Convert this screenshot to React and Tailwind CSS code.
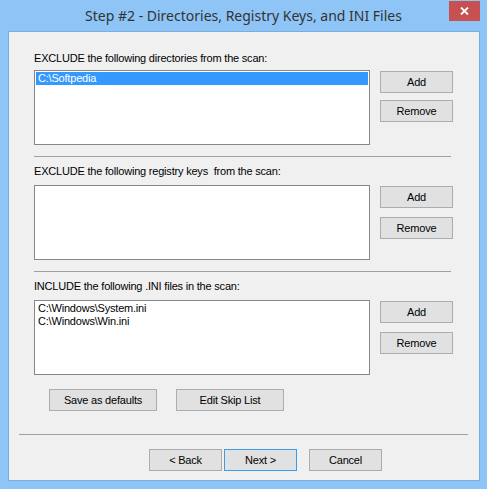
import React from 'react';

const font = { fontFamily: '"Liberation Sans", Arial, sans-serif' };

function WinButton({ children, className = '', focused = false }) {
  return (
    <button
      className={`h-[22px] flex items-center justify-center text-[11px] tracking-[-0.2px] text-black bg-[#e1e1e1] border ${
        focused ? 'border-[#3c9ce8]' : 'border-[#adadad]'
      } ${className}`}
    >
      {children}
    </button>
  );
}

function ListBox({ items = [], selected = -1 }) {
  return (
    <div className="w-[336px] h-[75px] bg-white border border-[#828790] p-px flex flex-col">
      {items.map((item, i) => (
        <div
          key={item}
          className={`h-[13px] leading-[13px] pl-[2px] text-[11px] tracking-[-0.2px] ${
            i === selected ? 'bg-[#3399ff] text-white' : 'text-black'
          }`}
        >
          {item}
        </div>
      ))}
    </div>
  );
}

function Section({ label, items, selected, labelTop, listTop, removeGap = 9 }) {
  return (
    <div className="flex flex-col">
      <div
        className="h-[13px] leading-[13px] text-[11px] tracking-[-0.2px] text-black whitespace-pre"
        style={{ marginTop: labelTop }}
      >
        {label}
      </div>
      <div className="flex" style={{ marginTop: listTop }}>
        <ListBox items={items} selected={selected} />
        <div className="ml-[10px] pt-px flex flex-col" style={{ gap: removeGap }}>
          <WinButton className="w-[73px]">Add</WinButton>
          <WinButton className="w-[73px]">Remove</WinButton>
        </div>
      </div>
    </div>
  );
}

export default function App() {
  return (
    <div className="w-[487px] h-[489px] bg-[#8ec5f6] flex flex-col relative overflow-hidden" style={font}>
      {/* Title bar */}
      <div className="h-[31px] relative flex items-center justify-center">
        <span
          className="text-[14px] text-[#333333]"
          style={{ fontFamily: '"Noto Sans", "Open Sans", sans-serif' }}
        >
          Step #2 - Directories, Registry Keys, and INI Files
        </span>
        <div className="absolute right-[7px] top-px w-[31px] h-[20px] bg-[#c75050] flex items-center justify-center">
          <svg width="9" height="8" viewBox="0 0 9 8">
            <path d="M1 0.5 L8 7.5 M8 0.5 L1 7.5" stroke="white" strokeWidth="1.8" />
          </svg>
        </div>
      </div>

      {/* Client area */}
      <div className="ml-[8px] w-[472px] h-[450px] bg-[#f0f0f0] border border-[#7aaee0] flex flex-col">
        <div className="pl-[25px] flex flex-col">
          <Section
            label="EXCLUDE the following directories from the scan:"
            items={['C:\\Softpedia']}
            selected={0}
            labelTop={20}
            listTop={5}
            removeGap={7}
          />
          <div className="mt-[11px] w-[417px] h-px bg-[#a0a0a0]" />
          <Section
            label="EXCLUDE the following registry keys  from the scan:"
            items={[]}
            labelTop={8}
            listTop={7}
          />
          <div className="mt-[11px] w-[417px] h-px bg-[#a0a0a0]" />
          <Section
            label="INCLUDE the following .INI files in the scan:"
            items={['C:\\Windows\\System.ini', 'C:\\Windows\\Win.ini']}
            labelTop={8}
            listTop={7}
          />
          <div className="mt-[14px] ml-[15px] flex gap-[19px]">
            <WinButton className="w-[108px]">Save as defaults</WinButton>
            <WinButton className="w-[108px]">Edit Skip List</WinButton>
          </div>
        </div>

        <div className="mt-[23px] ml-[10px] w-[449px] h-px bg-[#a0a0a0]" />

        <div className="mt-[14px] ml-[140px] flex">
          <WinButton className="w-[73px]">&lt; Back</WinButton>
          <WinButton className="w-[73px] ml-[2px]" focused>Next &gt;</WinButton>
          <WinButton className="w-[73px] ml-[12px]">Cancel</WinButton>
        </div>
      </div>
    </div>
  );
}
